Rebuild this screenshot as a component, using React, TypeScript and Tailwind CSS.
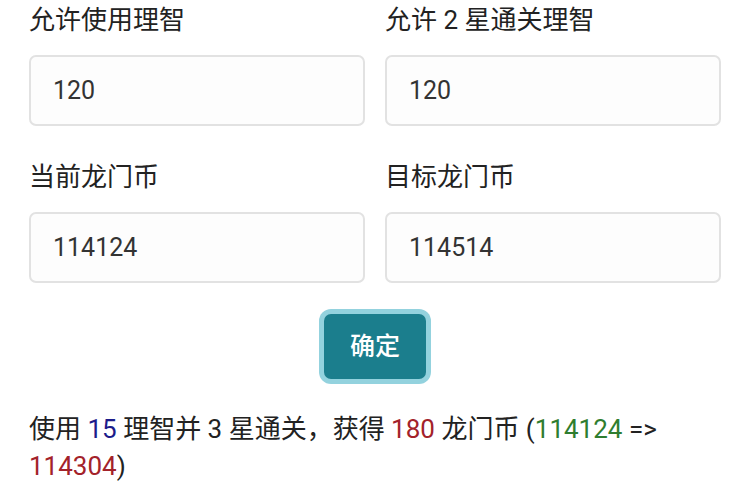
import React from "react";

const font = { fontFamily: '"Roboto", "Noto Sans CJK SC", sans-serif' };

function Field({ label, value }: { label: string; value: string }) {
  return (
    <div className="flex flex-col">
      <div className="h-[40px] leading-[40px] text-[26px] text-[#222]">{label}</div>
      <div className="mt-[15px] h-[71px] rounded-[7px] border-2 border-[#e2e2e2] bg-[#fdfdfd] flex items-center px-[22px] text-[25px] text-[#333]">
        {value}
      </div>
    </div>
  );
}

export default function App() {
  return (
    <div className="w-[750px] h-[500px] bg-white overflow-hidden px-[29px]" style={font}>
      <div className="grid grid-cols-2 gap-x-[20px] gap-y-[31px]">
        <Field label="允许使用理智" value="120" />
        <Field label="允许 2 星通关理智" value="120" />
        <Field label="当前龙门币" value="114124" />
        <Field label="目标龙门币" value="114514" />
      </div>

      <div className="flex justify-center mt-[31px]">
        <button className="w-[102px] h-[65px] rounded-[7px] bg-[#1b7e8d] text-white text-[25px] font-medium ring-[5px] ring-[#93d2de]">
          确定
        </button>
      </div>

      <p className="mt-[32px] text-[26px] leading-[37px] text-[#222]">
        使用 <span className="text-[#1c1c8a]">15</span> 理智并 3 星通关，获得{" "}
        <span className="text-[#a3222a]">180</span> 龙门币 (
        <span className="text-[#2f7d2f]">114124</span> =&gt;{" "}
        <span className="text-[#a3222a]">114304</span>)
      </p>
    </div>
  );
}
